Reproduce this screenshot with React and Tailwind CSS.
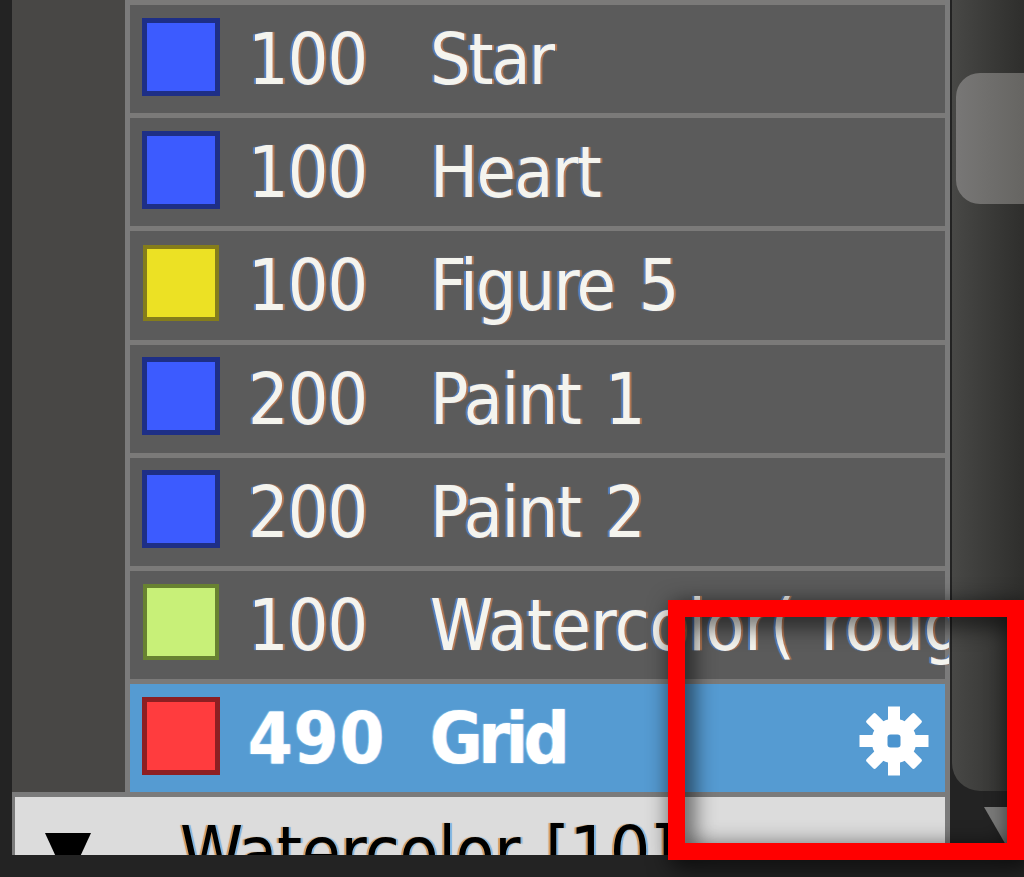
import React from 'react';
import clsx from 'clsx';

const BLUE = 'h-[78px] w-[78px] border-[5px] border-[#1e2f86] bg-[#3c5bff]';
const YELLOW = 'm-[1px] h-[76px] w-[76px] border-4 border-[#857d1b] bg-[#ece124]';
const GREEN = 'm-[1px] h-[76px] w-[76px] border-4 border-[#688231] bg-[#c8f078]';
const RED = 'h-[78px] w-[78px] border-[5px] border-[#8d1f22] bg-[#ff3c3e]';

const brushes = [
  { id: 1, size: '100', name: 'Star', swatch: BLUE, tracking: 'tracking-[-2px]' },
  { id: 2, size: '100', name: 'Heart', swatch: BLUE, tracking: 'tracking-[-1.5px]' },
  { id: 3, size: '100', name: 'Figure 5', swatch: YELLOW, tracking: 'tracking-[-1.7px]' },
  { id: 4, size: '200', name: 'Paint 1', swatch: BLUE, tracking: 'tracking-[-1.5px]' },
  { id: 5, size: '200', name: 'Paint 2', swatch: BLUE, tracking: 'tracking-[-1.5px]' },
  { id: 6, size: '100', name: 'Watercolor( rough)', swatch: GREEN, tracking: 'tracking-[-0.4px]' },
  { id: 7, size: '490', name: 'Grid', swatch: RED, tracking: 'tracking-[-4px]', selected: true },
];

function GearIcon() {
  return (
    <svg viewBox="-35 -35 70 70" className="absolute left-[729px] top-[22px] h-[70px] w-[70px]">
      <g fill="#fff">
        <rect x="-6" y="-34.5" width="12" height="69" />
        <rect x="-34.5" y="-6" width="69" height="12" />
        <rect x="-6.5" y="-34" width="13" height="68" rx="2" transform="rotate(45)" />
        <rect x="-6.5" y="-34" width="13" height="68" rx="2" transform="rotate(-45)" />
        <circle r="22.5" />
      </g>
      <rect x="-6.5" y="-6.5" width="13" height="13" rx="3" fill="#4b94cf" />
    </svg>
  );
}

function BrushRow({ brush }) {
  return (
    <div
      className={clsx(
        'relative flex h-[113.2px] shrink-0 items-start border-t-[5px] border-[#7b7a79] whitespace-nowrap',
        brush.selected
          ? 'bg-[#559bd2] font-bold text-white text-shadow-[-1px_0_1px_#8fdcff,1px_0_1px_#f5dfee]'
          : 'bg-[#5b5b5b] text-[#f4f4ee] text-shadow-[-2px_0_1px_#5582c4,2px_0_1px_#b87a55]'
      )}
    >
      <div className="w-[118px] shrink-0 pl-3 pt-[12.5px]">
        <div className={brush.swatch} />
      </div>
      <span className={clsx('w-[182px] shrink-0 pt-[19px]', brush.selected ? 'tracking-[1.4px]' : 'tracking-[-0.9px]')}>
        {brush.size}
      </span>
      <span className={clsx('h-[108px] w-[519px] shrink-0 overflow-hidden pt-[19px] [word-spacing:6px]', brush.tracking)}>
        {brush.name}
      </span>
      {brush.selected && <GearIcon />}
    </div>
  );
}

function Scrollbar() {
  return (
    <div className="flex w-[74px] shrink-0 flex-col bg-[#232323] pl-[2px]">
      <div className="h-[791px] rounded-bl-[28px] bg-linear-to-r from-[#484846] to-[#2e2e2c] pl-1 pt-[73px]">
        <div className="h-[131px] rounded-l-[24px] bg-linear-to-r from-[#787776] to-[#666562]" />
      </div>
      <div className="flex justify-end pt-[16px]">
        <svg viewBox="0 0 40 40" className="h-10 w-10">
          <path d="M0 0h60L30 52z" fill="#7b7b7a" />
        </svg>
      </div>
    </div>
  );
}

export default function App() {
  return (
    <div className="relative flex h-[877px] w-[1024px] flex-col overflow-hidden bg-[#232323] font-['DejaVu_Sans_Condensed','DejaVu_Sans',sans-serif] text-[71px] leading-[72px] [font-stretch:condensed]">
      <div className="flex h-[855px] shrink-0">
        <div className="flex w-[938px] grow flex-col pl-3">
          <div className="flex h-[792px] shrink-0">
            <div className="w-[113px] shrink-0 bg-[#484745]" />
            <div className="flex min-w-0 grow flex-col border-l-[5px] border-r-[5px] border-[#7b7b7b]">
              {brushes.map(brush => <BrushRow key={brush.id} brush={brush} />)}
            </div>
          </div>
          <div className="relative flex h-[63px] shrink-0 items-start overflow-hidden border-l-[3px] border-r-[5px] border-t-[5px] border-[#7b7b7b] bg-[#dcdcdc] whitespace-nowrap text-black text-shadow-[-2px_0_1px_#d59a5c,2px_0_1px_#7fb4e0]">
            <div className="w-[165px] shrink-0 pl-[30px] pt-[36px]">
              <svg viewBox="0 0 46 50" className="h-[50px] w-[46px]">
                <path d="M0 0h46L23 50z" />
              </svg>
            </div>
            <span className="pt-[20px] tracking-[-0.4px] [word-spacing:5px]">Watercolor [10]</span>
          </div>
        </div>
        <Scrollbar />
      </div>
      <div className="h-[22px] bg-[#232323]" />
      <div className="absolute left-[668px] top-[600px] h-[260px] w-[356px] border-[17px] border-[#ff0000] drop-shadow-[5px_6px_12px_rgba(0,0,0,0.85)]" />
    </div>
  );
}
